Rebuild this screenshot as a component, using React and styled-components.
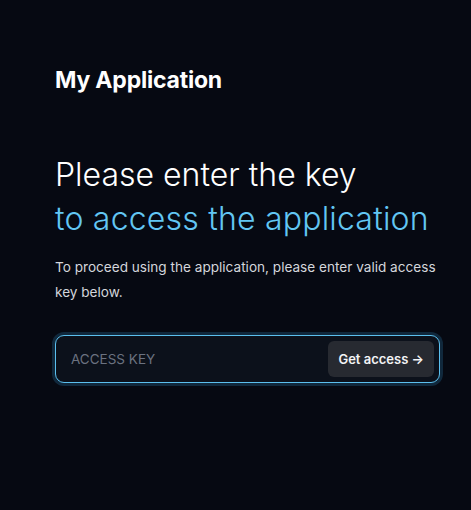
import React from "react";
import styled, { createGlobalStyle } from "styled-components";

const GlobalStyle = createGlobalStyle`
  html, body {
    margin: 0;
    padding: 0;
    background: #060912;
  }
  body {
    font-family: Inter, "Noto Sans", sans-serif;
    color: #ffffff;
    -webkit-font-smoothing: antialiased;
  }
`;

const Page = styled.main`
  min-height: 510px;
  box-sizing: border-box;
  padding: 64px 31px 0 55px;
  background: #060912;
`;

const Brand = styled.h1`
  margin: 0;
  font-size: 23px;
  font-weight: 700;
  line-height: 32px;
  letter-spacing: -0.2px;
`;

const Heading = styled.h2`
  margin: 57px 0 0;
  font-size: 32px;
  font-weight: 300;
  line-height: 44px;
`;

const Accent = styled.span`
  display: block;
  color: #62c6f3;
  letter-spacing: 0.2px;
`;

const Lead = styled.p`
  margin: 14px 0 0;
  font-size: 13.6px;
  line-height: 25px;
  color: #d4d6dc;
`;

const KeyForm = styled.form`
  margin-top: 30px;
  display: flex;
  align-items: center;
  gap: 8px;
  height: 48px;
  box-sizing: border-box;
  padding: 0 5px 0 13px;
  border: 1.5px solid #5bbfee;
  border-radius: 9px;
  background: #0c111b;
  box-shadow: 0 0 0 3px rgba(56, 150, 210, 0.22);
`;

const KeyInput = styled.input`
  flex: 1;
  min-width: 0;
  border: none;
  outline: none;
  background: transparent;
  color: #ffffff;
  font-family: inherit;
  font-size: 13.5px;
  caret-color: #ffffff;
  &::placeholder {
    color: #6b7280;
  }
`;

const Submit = styled.button`
  height: 36px;
  padding: 0 10px;
  border: none;
  border-radius: 6px;
  background: #272a31;
  color: #f3f4f6;
  font-family: inherit;
  font-size: 13px;
  font-weight: 600;
  cursor: pointer;
`;

export default function App() {
  return (
    <>
      <GlobalStyle />
      <Page>
        <Brand>My Application</Brand>
        <Heading>
          Please enter the key
          <Accent>to access the application</Accent>
        </Heading>
        <Lead>
          To proceed using the application, please enter valid access key
          below.
        </Lead>
        <KeyForm onSubmit={e => e.preventDefault()}>
          <KeyInput placeholder="ACCESS KEY" autoFocus />
          <Submit type="submit">Get access →</Submit>
        </KeyForm>
      </Page>
    </>
  );
}
